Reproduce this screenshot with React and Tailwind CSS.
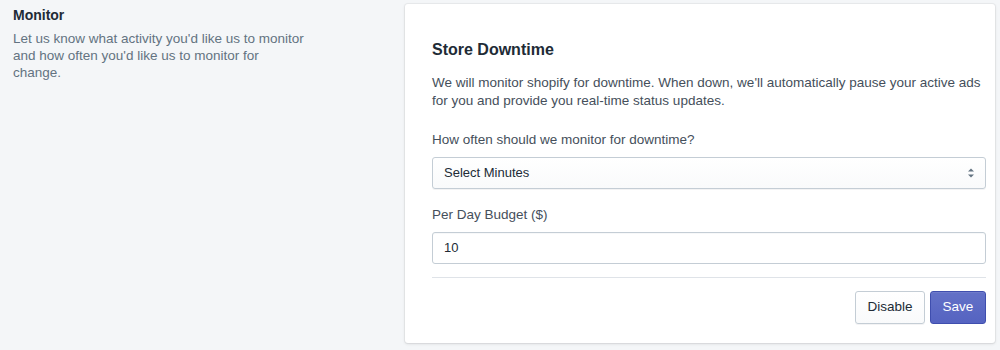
import React from 'react';

export default function App() {
    return (
        <div className="w-[1000px] h-[350px] bg-[#f4f6f8] flex font-['Liberation_Sans',Arial,sans-serif] overflow-hidden">
            {/* Left description column */}
            <div className="w-[405px] pl-[13px] pt-[5px] pr-[97px]">
                <div className="text-[14px] font-semibold text-[#212b36] leading-[20px]">Monitor</div>
                <p className="mt-[5px] text-[13.5px] leading-[17px] text-[#637381]">
                    Let us know what activity you'd like us to monitor and how often you'd like us to monitor for change.
                </p>
            </div>

            {/* Card */}
            <div className="w-[590px] mt-[4px] h-[339px] bg-white rounded-[3px] shadow-[0_0_0_1px_rgba(63,63,68,0.05),0_1px_3px_0_rgba(63,63,68,0.15)] pl-[27px] pr-[9px] pt-[34px]">
                <h2 className="text-[16px] font-semibold text-[#212b36] leading-[24px]">Store Downtime</h2>
                <p className="mt-[12px] text-[13.5px] leading-[18px] text-[#454f5b]">
                    We will monitor shopify for downtime. When down, we'll automatically pause your active ads for you and provide you real-time status updates.
                </p>

                <label className="block mt-[21px] text-[13.5px] leading-[18px] text-[#454f5b]">How often should we monitor for downtime?</label>
                <div className="mt-[8px] h-[32px] border border-[#c4cdd5] rounded-[3px] bg-gradient-to-b from-white to-[#f9fafb] shadow-[0_1px_0_0_rgba(22,29,37,0.05)] flex items-center justify-between pl-[11px] pr-[10px]">
                    <span className="text-[13px] text-[#212b36]">Select Minutes</span>
                    <svg width="8" height="12" viewBox="0 0 8 12" className="text-[#637381]">
                        <path d="M1 4.5 L4 1.5 L7 4.5 Z" fill="currentColor" />
                        <path d="M1 7.5 L4 10.5 L7 7.5 Z" fill="currentColor" />
                    </svg>
                </div>

                <label className="block mt-[17px] text-[13.5px] leading-[18px] text-[#454f5b]">Per Day Budget ($)</label>
                <div className="mt-[8px] h-[32px] border border-[#c4cdd5] rounded-[3px] bg-white shadow-[inset_0_1px_0_0_rgba(99,115,129,0.05)] flex items-center pl-[11px]">
                    <span className="text-[13px] text-[#212b36]">10</span>
                </div>

                <div className="mt-[13px] border-t border-[#dfe3e8]" />

                <div className="mt-[13px] flex justify-end gap-[5px]">
                    <button className="h-[33px] w-[70px] rounded-[3px] border border-[#c4cdd5] bg-gradient-to-b from-white to-[#f9fafb] shadow-[0_1px_0_0_rgba(22,29,37,0.05)] text-[13.5px] text-[#212b36]">
                        Disable
                    </button>
                    <button className="h-[33px] w-[56px] rounded-[3px] border border-[#3f4eae] bg-gradient-to-b from-[#6371c7] to-[#5563c1] shadow-[inset_0_1px_0_0_#6f7bcb] text-[13.5px] text-white">
                        Save
                    </button>
                </div>
            </div>
        </div>
    );
}
